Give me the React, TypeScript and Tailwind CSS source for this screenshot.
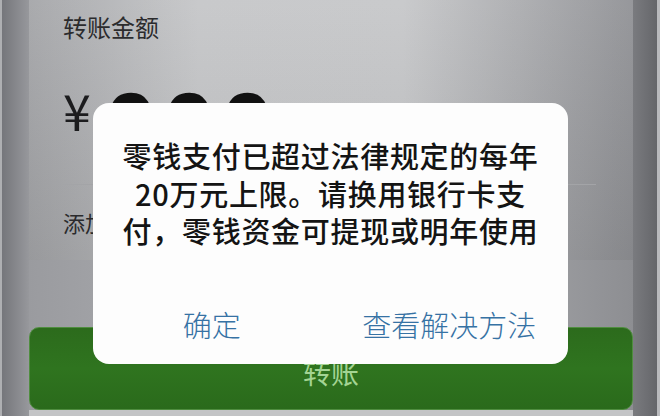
import React from 'react';

const cjk = "font-['Noto_Sans_CJK_SC','Noto_Sans',sans-serif]";

function TransferPage() {
  return (
    <div className="flex h-full w-full">
      {/* left edge of the phone frame */}
      <div className="flex w-[29px]">
        <div className="w-[2px] bg-[#aeafb2]" />
        <div className="flex-1 bg-gradient-to-r from-[#75767b] to-[#97989c]" />
      </div>

      <div className="flex flex-1 flex-col bg-[linear-gradient(to_right,#9a9b9f,#abacb0_30%,#aaabae_70%,#8d8e92)]">
        {/* amount card */}
        <section className="flex h-[260px] flex-col bg-[linear-gradient(to_bottom,rgba(255,255,255,0.06),rgba(0,0,0,0.07)),linear-gradient(to_right,#a4a5a8,#c5c6c8_28%,#c6c7c9_62%,#909195)] pl-[34px] pr-[37px]">
          <p className="mt-[11px] text-[24px] leading-[32px] text-[#2b2b2d]">转账金额</p>
          <div className="mt-[36px] flex h-[105px] items-start">
            <span className="text-[50px] leading-[60px] text-[#1c1c1e]">¥</span>
            <span className="ml-[14px] mt-[-7px] font-['Liberation_Sans',sans-serif] text-[94px] font-bold leading-[110px] tracking-[6px] text-[#111]">
              000
            </span>
          </div>
          <div className="h-px bg-[#a3a4a7]" />
          <p className="mt-[22px] text-[22px] leading-[30px] text-[#2a2a2c]">添加转账说明</p>
        </section>

        {/* primary action */}
        <button className="mt-[67px] flex h-[83px] items-center justify-center rounded-[10px] border border-[#4f8d3f] bg-gradient-to-b from-[#2c6b1c] via-[#2f741f] to-[#2a6a1b] pt-[6px] text-[28px] text-[#a3d493]">
          转账
        </button>
        <div className="flex-1 bg-[#c3c4c6]" />
      </div>

      {/* right edge of the phone frame */}
      <div className="flex w-[27px]">
        <div className="flex-1 bg-gradient-to-r from-[#7a7b7f] to-[#65666a]" />
        <div className="w-[3px] bg-[#b9babd]" />
      </div>
    </div>
  );
}

function LimitDialog() {
  return (
    <div className="absolute left-[93px] top-[103px] flex h-[261px] w-[475px] flex-col rounded-[16px] bg-[#fdfdfd]">
      <div className="pt-[34px] text-center text-[29px] font-medium leading-[37.5px] tracking-[0.7px] text-[#141414]">
        <span className="block">零钱支付已超过法律规定的每年</span>
        <span className="block">20万元上限。请换用银行卡支</span>
        <span className="block">付，零钱资金可提现或明年使用</span>
      </div>
      <div className="mt-auto mb-[22px] grid grid-cols-2 text-center text-[29px] font-light leading-[36px] text-[#3672a4]">
        <span>确定</span>
        <span>查看解决方法</span>
      </div>
    </div>
  );
}

export default function App() {
  return (
    <div className={`relative h-[416px] w-[660px] overflow-hidden ${cjk}`}>
      <TransferPage />
      <LimitDialog />
    </div>
  );
}
